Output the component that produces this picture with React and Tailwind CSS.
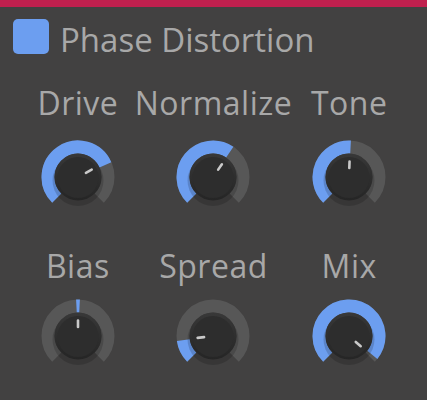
import React from 'react';

const BLUE = '#6c9ef0';

const polar = (r, deg) => {
    const a = (deg * Math.PI) / 180;
    return [37 + r * Math.sin(a), 37 - r * Math.cos(a)];
};

const arcPath = (r, from, to) => {
    const [x1, y1] = polar(r, from);
    const [x2, y2] = polar(r, to);
    const large = to - from > 180 ? 1 : 0;
    return `M ${x1} ${y1} A ${r} ${r} 0 ${large} 1 ${x2} ${y2}`;
};

// value arc goes from `from` to `to`, indicator sits at `angle` (degrees clockwise from top)
const Knob = ({ from, to, angle }) => {
    const [ix1, iy1] = polar(9, angle);
    const [ix2, iy2] = polar(15.5, angle);
    return (
        <svg width="74" height="74" viewBox="0 0 74 74">
            <defs>
                <linearGradient id="rim" x1="0" y1="0" x2="0" y2="1">
                    <stop offset="0" stopColor="#383838" />
                    <stop offset="1" stopColor="#252525" />
                </linearGradient>
            </defs>
            <path d={arcPath(30, -135, 135)} stroke="#575757" strokeWidth="13" fill="none" />
            <path d={arcPath(30, from, to)} stroke={BLUE} strokeWidth="13" fill="none" />
            <circle cx="37" cy="40.5" r="25.5" fill="#000" opacity="0.16" />
            <circle cx="37" cy="37" r="23.5" fill="url(#rim)" />
            <circle cx="37" cy="37.5" r="20.5" fill="#2d2d2d" />
            <line x1={ix1} y1={iy1} x2={ix2} y2={iy2} stroke="#c9c9c9" strokeWidth="2.6" strokeLinecap="round" />
        </svg>
    );
};

const row1 = [
    { label: 'Drive', from: -135, to: 66, angle: 62 },
    { label: 'Normalize', from: -135, to: 34, angle: 35 },
    { label: 'Tone', from: -135, to: 3, angle: 2 },
];

const row2 = [
    { label: 'Bias', from: -3, to: 3, angle: 0 },
    { label: 'Spread', from: -135, to: -98, angle: -97 },
    { label: 'Mix', from: -135, to: 129, angle: 131 },
];

const KnobRow = ({ items, labelGap }) => (
    <div className="grid grid-cols-3 px-[10px]">
        {items.map((k) => (
            <div key={k.label} className="flex flex-col items-center">
                <div className="text-[32px] leading-none h-[31px] tracking-[0.5px] text-[#a8a8a8] whitespace-nowrap">{k.label}</div>
                <div className={labelGap}>
                    <Knob from={k.from} to={k.to} angle={k.angle} />
                </div>
            </div>
        ))}
    </div>
);

export default function App() {
    return (
        <div className="w-[427px] h-[400px] bg-[#424141] overflow-hidden" style={{ fontFamily: '"Open Sans", "Noto Sans", sans-serif' }}>
            <div className="h-[7px] bg-[#c0204e]" />
            <div className="flex items-start pl-[13px] pt-[12px]">
                <div className="w-[36px] h-[35px] rounded-[5px] bg-[#6c9ef0]" />
                <div className="ml-[11px] mt-[4px] text-[33px] leading-none h-[33px] text-[#a8a8a8] whitespace-nowrap">Phase Distortion</div>
            </div>
            <div className="mt-[31px]">
                <KnobRow items={row1} labelGap="mt-[22px]" />
            </div>
            <div className="mt-[36px]">
                <KnobRow items={row2} labelGap="mt-[18px]" />
            </div>
        </div>
    );
}
